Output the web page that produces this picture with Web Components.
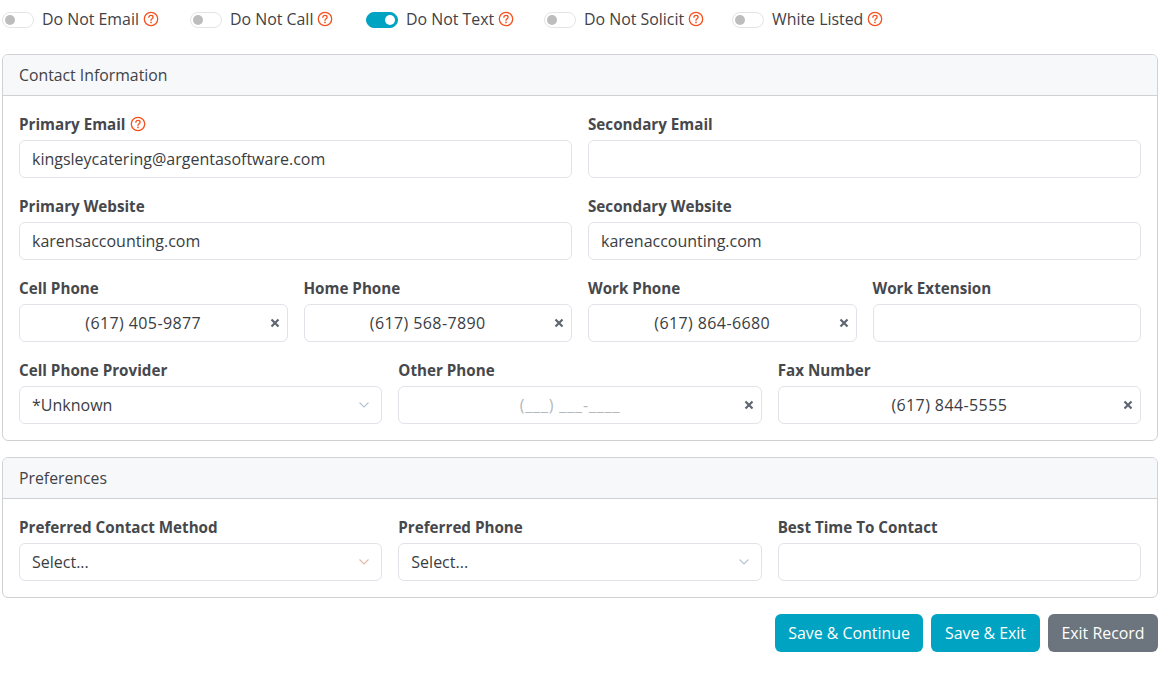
<!DOCTYPE html>
<html><head><meta charset="utf-8"><title>Contact</title>
<style>
html,body{margin:0;padding:0;background:#fff;font-family:"Open Sans","Noto Sans","Liberation Sans",sans-serif;font-size:16px;color:#3f4246}
</style></head><body>
<contact-page>
  <div slot="toggles">
    <toggle-switch>Do Not Email</toggle-switch>
    <toggle-switch>Do Not Call</toggle-switch>
    <toggle-switch on>Do Not Text</toggle-switch>
    <toggle-switch>Do Not Solicit</toggle-switch>
    <toggle-switch>White Listed</toggle-switch>
  </div>
  <info-card title="Contact Information">
    <form-row cols="2">
      <form-field label="Primary Email" help value="kingsleycatering@argentasoftware.com"></form-field>
      <form-field label="Secondary Email"></form-field>
    </form-row>
    <form-row cols="2">
      <form-field label="Primary Website" value="karensaccounting.com"></form-field>
      <form-field label="Secondary Website" value="karenaccounting.com"></form-field>
    </form-row>
    <form-row cols="4">
      <form-field label="Cell Phone" value="(617) 405-9877" type="phone"></form-field>
      <form-field label="Home Phone" value="(617) 568-7890" type="phone"></form-field>
      <form-field label="Work Phone" value="(617) 864-6680" type="phone"></form-field>
      <form-field label="Work Extension"></form-field>
    </form-row>
    <form-row cols="3" last>
      <form-field label="Cell Phone Provider" value="*Unknown" type="select"></form-field>
      <form-field label="Other Phone" value="(___) ___-____" type="phone" placeholder></form-field>
      <form-field label="Fax Number" value="(617) 844-5555" type="phone"></form-field>
    </form-row>
  </info-card>
  <info-card title="Preferences">
    <form-row cols="3" last>
      <form-field label="Preferred Contact Method" value="Select..." type="select" warm></form-field>
      <form-field label="Preferred Phone" value="Select..." type="select"></form-field>
      <form-field label="Best Time To Contact"></form-field>
    </form-row>
  </info-card>
  <div slot="actions">
    <action-button w="148">Save &amp; Continue</action-button>
    <action-button w="109">Save &amp; Exit</action-button>
    <action-button w="110" secondary>Exit Record</action-button>
  </div>
</contact-page>
<script>
const HELP = `<svg width="16" height="16" viewBox="0 0 16 16" fill="none" aria-hidden="true" style="display:block"><circle cx="8" cy="8" r="6.7" stroke="#f4511e" stroke-width="1.3"/><path d="M5.9 6.3C5.9 5.1 6.9 4.4 8 4.4s2.1.7 2.1 1.8c0 1.5-2.1 1.6-2.1 3.1" stroke="#f4511e" stroke-width="1.3" stroke-linecap="round"/><circle cx="8" cy="11.4" r=".85" fill="#f4511e"/></svg>`;
class ContactPage extends HTMLElement{constructor(){super();this.attachShadow({mode:'open'}).innerHTML=`<style>
:host{display:block;width:1165px;height:700px;box-sizing:border-box;padding:0 7px 0 2px;overflow:hidden}
.top{height:54px;box-sizing:border-box;padding-top:10px}
::slotted([slot=toggles]){display:flex}
::slotted([slot=actions]){display:flex;justify-content:flex-end;gap:8px}
</style><div class="top"><slot name="toggles"></slot></div><slot></slot><slot name="actions"></slot>`}}
class ToggleSwitch extends HTMLElement{constructor(){super();const on=this.hasAttribute('on');this.attachShadow({mode:'open'}).innerHTML=`<style>
:host{display:flex;align-items:center;height:18px;font-size:15.9px;line-height:18px;color:#3f4246}
:host(:nth-child(1)){width:188px}:host(:nth-child(2)){width:176px}:host(:nth-child(3)){width:178px}:host(:nth-child(4)){width:188px}
.t{box-sizing:border-box;width:32px;height:16px;margin-top:2px;border-radius:8px;border:1px solid ${on?'#00a3c1':'#e3e4e8'};background:${on?'#00a3c1':'#fff'};display:flex;align-items:center;justify-content:${on?'flex-end':'flex-start'};padding:0 2px;margin-right:8px;flex:none}
.k{width:10px;height:10px;border-radius:50%;background:${on?'#fff':'#bdbdbd'}}
.h{margin-left:4px}
</style><span class="t"><span class="k"></span></span><slot></slot><span class="h">${HELP}</span>`}}
class InfoCard extends HTMLElement{constructor(){super();this.attachShadow({mode:'open'}).innerHTML=`<style>
:host{display:block;box-sizing:border-box;border:1px solid #cfd1d5;border-radius:6px;margin-bottom:16px;overflow:hidden}
.h{box-sizing:border-box;background:#f7f8fa;border-bottom:1px solid #cfd1d5;padding:0 16px;line-height:41px;font-size:15.8px;color:#3f4246;height:41px}
.b{padding:16px}
</style><div class="h">${this.getAttribute('title')}</div><div class="b"><slot></slot></div>`}}
class FormRow extends HTMLElement{constructor(){super();const c=this.getAttribute('cols');this.attachShadow({mode:'open'}).innerHTML=`<style>
:host{display:grid;grid-template-columns:repeat(${c},minmax(0,1fr));column-gap:16px;margin-bottom:${this.hasAttribute('last')?0:16}px}
</style><slot></slot>`}}
class FormField extends HTMLElement{constructor(){super();const a=n=>this.getAttribute(n),t=a('type'),v=a('value')||'',ph=this.hasAttribute('placeholder');
const cen=t==='phone';
this.attachShadow({mode:'open'}).innerHTML=`<style>
:host{display:block;min-width:0}
.l{display:flex;align-items:center;gap:4px;height:24px;margin-bottom:4px;font-weight:700;font-size:15.2px;color:#46484c}
.i{position:relative;box-sizing:border-box;height:38px;border:1px solid #e1e3e8;border-radius:6px;background:#fff;display:flex;align-items:center;padding:0 12px;font-size:16px;color:#3a3d42;white-space:nowrap}
.v{flex:1;${cen?`text-align:center;padding-right:20px;letter-spacing:${ph?.85:.4}px;`:''}${ph?'color:#b4b7bc;':''}}
.x{position:absolute;right:6px;top:11.5px;width:12px;height:12px}
.c{position:absolute;right:11px;top:14px}
</style><div class="l"><span>${a('label')}</span>${this.hasAttribute('help')?HELP:''}</div>
<div class="i"><span class="v">${v}</span>${cen?`<svg class="x" viewBox="0 0 12 12"><path d="M2.5 2.5l7 7M9.5 2.5l-7 7" stroke="#5f6670" stroke-width="2.2" stroke-linecap="butt"/></svg>`:''}${t==='select'?`<svg class="c" width="12" height="8" viewBox="0 0 12 8" fill="none"><path d="M1.5 1.5L6 6l4.5-4.5" stroke="${this.hasAttribute('warm')?'#e3b9a6':'#b5c3d1'}" stroke-width="1.1"/></svg>`:''}</div>`}}
class ActionButton extends HTMLElement{constructor(){super();this.attachShadow({mode:'open'}).innerHTML=`<style>
:host{display:flex;align-items:center;justify-content:center;box-sizing:border-box;height:38px;width:${this.getAttribute('w')}px;border-radius:6px;background:${this.hasAttribute('secondary')?'#6c757d':'#00a3c1'};color:#fff;font-size:15.9px;white-space:nowrap}
</style><slot></slot>`}}
customElements.define('contact-page',ContactPage);
customElements.define('toggle-switch',ToggleSwitch);
customElements.define('info-card',InfoCard);
customElements.define('form-row',FormRow);
customElements.define('form-field',FormField);
customElements.define('action-button',ActionButton);
</script>
</body></html>
